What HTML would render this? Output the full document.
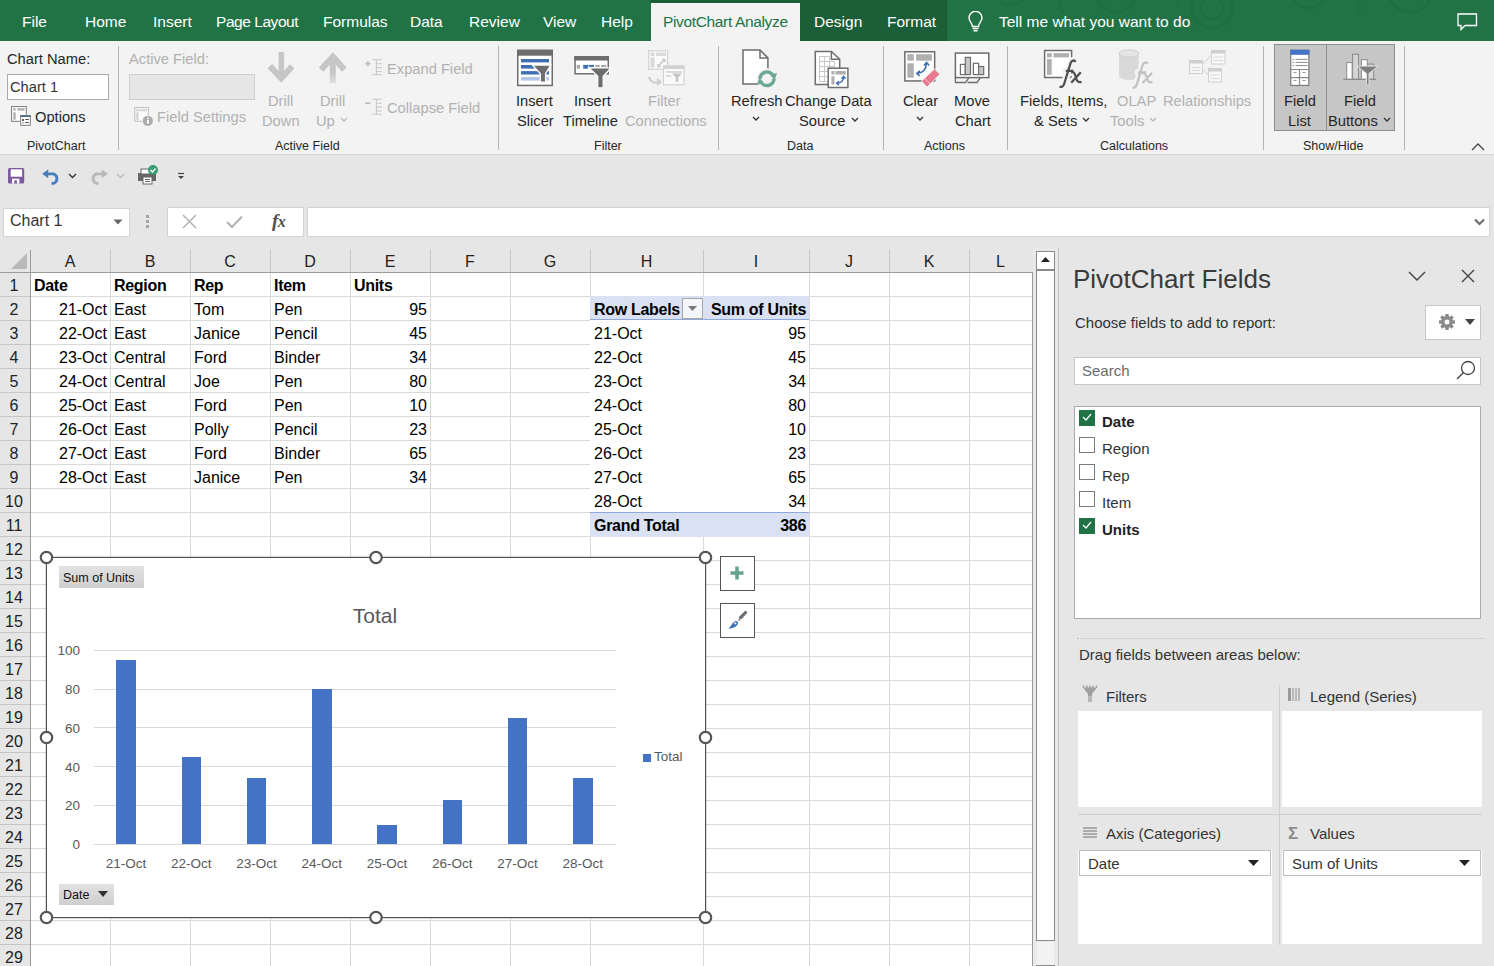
<!DOCTYPE html>
<html><head><meta charset="utf-8">
<style>
*{box-sizing:border-box;margin:0;padding:0}
html,body{width:1494px;height:966px;overflow:hidden;background:#e6e6e6;font-family:"Liberation Sans",sans-serif;position:relative}
.a{position:absolute}
.t{position:absolute;white-space:nowrap}
#title{left:0;top:0;width:1494px;height:41px;background:#217346}
.tab{position:absolute;top:13px;color:#fff;font-size:15.5px}
#ribbon{left:0;top:41px;width:1494px;height:114px;background:#f3f3f3;border-bottom:1px solid #d6d6d6}
.rl{color:#262626;font-size:14.7px}
.dis{color:#b1b1b1}
.grp{color:#262626;font-size:12.5px}
.hd{font-size:16px;color:#222;text-align:center}
.c{font-size:16px;color:#000}
.ax{font-size:13.5px;color:#595959}
.pn{font-size:15px;color:#333}
.sep{position:absolute;top:46px;width:1px;height:104px;background:#b4b4b4}
</style></head><body>
<div id="title" class="a">
  <div class="a" style="left:650px;top:0;width:297px;height:3px;background:#1b5e38"></div>
  <div class="a" style="left:800px;top:0;width:147px;height:41px;background:#1b5e38"></div>
  <div class="a" style="left:651px;top:3px;width:149px;height:38px;background:#f3f3f3"></div>
  <div class="tab" style="left:22px">File</div>
  <div class="tab" style="left:85px">Home</div>
  <div class="tab" style="left:153px">Insert</div>
  <div class="tab" style="left:216px;letter-spacing:-0.45px">Page Layout</div>
  <div class="tab" style="left:323px">Formulas</div>
  <div class="tab" style="left:410px">Data</div>
  <div class="tab" style="left:469px">Review</div>
  <div class="tab" style="left:543px">View</div>
  <div class="tab" style="left:601px">Help</div>
  <div class="tab" style="left:663px;color:#217346;letter-spacing:-0.35px">PivotChart Analyze</div>
  <div class="tab" style="left:814px">Design</div>
  <div class="tab" style="left:887px">Format</div>
  
  <svg class="a" style="left:1000px;top:0" width="450" height="41" viewBox="0 0 450 41"><g fill="none" stroke="rgba(0,0,0,0.04)" stroke-width="3"><circle cx="10" cy="-12" r="17"/><circle cx="116" cy="-8" r="20"/><circle cx="212" cy="8" r="20"/><circle cx="212" cy="8" r="11"/><circle cx="309" cy="-10" r="18"/><circle cx="410" cy="-10" r="22"/><path d="M61 0 C58 8 60 12 64 12"/><path d="M360 0 C356 8 358 14 362 14"/><path d="M178 0 V6"/></g></svg>
  <svg class="a" style="left:967px;top:11px" width="17" height="22" viewBox="0 0 17 22"><path d="M5.5 15.5 C5.5 12 2 10.5 2 6.8 A6.5 6.5 0 0 1 15 6.8 C15 10.5 11.5 12 11.5 15.5 Z" fill="none" stroke="#fff" stroke-width="1.4"/><path d="M5.5 17.5 H11.5 M6.5 19.8 H10.5" stroke="#fff" stroke-width="1.4"/></svg>
  <svg class="a" style="left:1457px;top:13px" width="21" height="18" viewBox="0 0 21 18"><path d="M1 1 H19.5 V12.5 H8 L4 16.5 V12.5 H1 Z" fill="none" stroke="#fff" stroke-width="1.3"/></svg>
<div class="tab" style="left:999px">Tell me what you want to do</div>
</div>

<div id="ribbon" class="a"></div>
<div class="sep" style="left:118px"></div>
<div class="sep" style="left:498px"></div>
<div class="sep" style="left:718px"></div>
<div class="sep" style="left:883px"></div>
<div class="sep" style="left:1007px"></div>
<div class="sep" style="left:1263px"></div>
<div class="sep" style="left:1404px"></div>
<!-- PivotChart group -->
<div class="t rl" style="left:7px;top:51px">Chart Name:</div>
<div class="a" style="left:7px;top:74px;width:102px;height:26px;background:#fff;border:1px solid #ababab"></div>
<div class="t rl" style="left:10px;top:79px;color:#333">Chart 1</div>
<svg class="a" style="left:8px;top:103px" width="26" height="26" viewBox="8 103 26 26"><rect x="11.6" y="106.6" width="14.7" height="14.7" fill="#fff" stroke="#6d6d6d" stroke-width="0.9"/><rect x="13.3" y="108.2" width="2.4" height="2.4" fill="#b0b0b0"/><rect x="17.3" y="108.2" width="7.4" height="2.4" fill="#b0b0b0"/><rect x="13.3" y="112.2" width="2.4" height="7.5" fill="#b0b0b0"/><rect x="19.8" y="114.8" width="11.4" height="11.4" fill="#fff"/><rect x="20.7" y="115.7" width="9.6" height="9.6" fill="#fff" stroke="#6d6d6d" stroke-width="0.9"/><rect x="20.3" y="115.3" width="10.4" height="1.6" fill="#44648a"/><rect x="22.1" y="119.1" width="1.8" height="1.8" fill="#444"/><rect x="25.1" y="119.1" width="3.8" height="0.9" fill="#444"/><rect x="22.1" y="122.1" width="1.8" height="1.8" fill="#bbb"/><rect x="25.1" y="122.1" width="3.8" height="0.9" fill="#444"/></svg>
<div class="t rl" style="left:35px;top:109px">Options</div>
<div class="t grp" style="left:27px;top:139px">PivotChart</div>
<!-- Active Field group -->
<div class="t rl dis" style="left:129px;top:51px">Active Field:</div>
<div class="a" style="left:129px;top:74px;width:126px;height:26px;background:#e6e6e6;border:1px solid #cfcfcf"></div>
<svg class="a" style="left:130px;top:104px" width="26" height="26" viewBox="130 104 26 26"><rect x="134.8" y="107.6" width="13.5" height="13.6" fill="#fafafa" stroke="#b8b8b8" stroke-width="0.9"/><rect x="136.3" y="109.1" width="2.2" height="2.2" fill="#d0d0d0"/><rect x="139.3" y="109.1" width="7.7" height="2.2" fill="#d6d6d6"/><rect x="136.3" y="112.3" width="2.2" height="7.5" fill="#d0d0d0"/><circle cx="147.8" cy="120.9" r="6" fill="#f3f3f3"/><circle cx="147.8" cy="120.9" r="5" fill="#ababab"/><rect x="147" y="119.8" width="1.8" height="3.9" fill="#fff"/><rect x="147" y="117.6" width="1.8" height="1.3" fill="#fff"/></svg>
<div class="t rl dis" style="left:157px;top:109px">Field Settings</div>
<svg class="a" style="left:260px;top:48px" width="44" height="40" viewBox="260 48 44 40"><rect x="278.6" y="51.9" width="5.5" height="24" fill="#c6c6c6"/><path d="M269.8 66.2 L281.3 78.3 L292.2 66.2" stroke="#c6c6c6" stroke-width="6.2" fill="none" stroke-linejoin="miter"/></svg>
<div class="t rl dis" style="left:268px;top:93px">Drill</div>
<div class="t rl dis" style="left:262px;top:113px">Down</div>
<svg class="a" style="left:312px;top:46px" width="44" height="42" viewBox="312 46 44 42"><defs><linearGradient id="gu" x1="0" y1="0" x2="0" y2="1"><stop offset="0.55" stop-color="#c6c6c6"/><stop offset="1" stop-color="#dedede"/></linearGradient></defs><rect x="329.8" y="57" width="6" height="26.3" fill="url(#gu)"/><path d="M321 69.6 L332.9 56.8 L344.3 69.6" stroke="#c6c6c6" stroke-width="6.2" fill="none" stroke-linejoin="miter"/></svg>
<div class="t rl dis" style="left:320px;top:93px">Drill</div>
<div class="t rl dis" style="left:316px;top:113px">Up <svg width="8" height="5" viewBox="0 0 8 5" style="vertical-align:4px;margin-left:1px"><path d="M1 1 L4 4 L7 1" stroke="#b8b8b8" stroke-width="1.3" fill="none"/></svg></div>
<svg class="a" style="left:362px;top:56px" width="24" height="22" viewBox="362 56 24 22"><path d="M365.1 63.6 H370.6 M367.85 61 V66.2" stroke="#bdbdbd" stroke-width="1.6"/><path d="M372.2 59.7 H381.8 M376.4 59.7 V74.7 M376.4 63.7 H381.8 M376.4 67.6 H381.8 M376.4 71.5 H381.8 M372.2 74.7 H381.8" stroke="#c8c8c8" stroke-width="1.1"/></svg>
<div class="t rl dis" style="left:387px;top:61px">Expand Field</div>
<svg class="a" style="left:362px;top:96px" width="24" height="22" viewBox="362 96 24 22"><path d="M365.1 103.2 H370.6" stroke="#bdbdbd" stroke-width="1.6"/><path d="M372.2 99.2 H381.8 M376.4 99.2 V114.2 M376.4 103.2 H381.8 M376.4 107.1 H381.8 M376.4 111 H381.8 M372.2 114.2 H381.8" stroke="#c8c8c8" stroke-width="1.1"/></svg>
<div class="t rl dis" style="left:387px;top:100px">Collapse Field</div>
<div class="t grp" style="left:275px;top:139px">Active Field</div>
<!-- Filter group -->
<svg class="a" style="left:517px;top:49px" width="37" height="38" viewBox="0 0 37 38"><rect x="0.75" y="1.45" width="34.5" height="35" fill="#fff" stroke="#6d6d6d" stroke-width="1.5"/><rect x="0" y="0.7" width="36" height="6" fill="#6d6d6d"/><rect x="4" y="10" width="28" height="3.4" fill="#3f6fb1"/><rect x="4" y="16" width="28" height="3.6" fill="#3f6fb1"/><rect x="4" y="22.1" width="28" height="3.4" fill="#3f6fb1"/><rect x="4" y="28" width="28" height="3.6" fill="#b4c6e7"/><path d="M15.3 16 H33.7 L28.6 24.7 V33.1 H23.4 V24.7 Z" fill="#6d6d6d" stroke="#fff" stroke-width="1.3"/></svg>
<div class="t rl" style="left:516px;top:93px">Insert</div>
<div class="t rl" style="left:517px;top:113px">Slicer</div>
<svg class="a" style="left:573px;top:55px" width="40" height="34" viewBox="0 0 40 34"><rect x="2.05" y="1.75" width="33.2" height="17" fill="#fff" stroke="#6d6d6d" stroke-width="1.5"/><rect x="1.3" y="1" width="34.7" height="4.5" fill="#6d6d6d"/><rect x="3.8" y="9.9" width="3.1" height="3.8" fill="#a6a6a6"/><rect x="10.2" y="9.9" width="5.1" height="3.8" fill="#3f6fb1"/><rect x="15.9" y="9.9" width="5.1" height="2" fill="#3f6fb1"/><rect x="22.3" y="9.9" width="4.4" height="2" fill="#a6a6a6"/><rect x="28" y="9.9" width="5.1" height="2" fill="#a6a6a6"/><path d="M15.9 12.8 H38.2 L30.2 21.3 V32.8 H24.7 V21.3 Z" fill="#6d6d6d" stroke="#fff" stroke-width="1.3"/></svg>
<div class="t rl" style="left:574px;top:93px">Insert</div>
<div class="t rl" style="left:563px;top:113px">Timeline</div>
<svg class="a" style="left:646px;top:49px" width="40" height="38" viewBox="0 0 40 38"><rect x="2.75" y="1.75" width="18.8" height="18.5" fill="#fafafa" stroke="#d2d2d2" stroke-width="1.2"/><rect x="4.5" y="3.5" width="4" height="3.5" fill="#dadada"/><rect x="10" y="3.5" width="10" height="3.5" fill="#dadada"/><rect x="4.5" y="8.5" width="4" height="10" fill="#dadada"/><path d="M12 17.5 L18.5 10.5 M16 10.3 H18.7 V13 M12 15 V17.7 H14.7" stroke="#c4c4c4" stroke-width="1.3" fill="none"/><rect x="17.5" y="17" width="20.5" height="18.8" fill="#fafafa" stroke="#d2d2d2" stroke-width="1.2"/><rect x="17" y="16.5" width="21.5" height="3.5" fill="#d2d2d2"/><path d="M20 23 H36 M20 27 H25" stroke="#cfcfcf" stroke-width="1.5"/><path d="M26 24.5 H36 L32.2 28.5 V33 H29.8 V28.5 Z" fill="#c4c4c4"/><path d="M3 28 C4 33 9 34.5 13 33" stroke="#cfcfcf" stroke-width="2.2" fill="none"/><path d="M11 30 L14.5 33 L11 36" stroke="#cfcfcf" stroke-width="2" fill="none"/></svg>
<div class="t rl dis" style="left:648px;top:93px">Filter</div>
<div class="t rl dis" style="left:625px;top:113px">Connections</div>
<div class="t grp" style="left:594px;top:139px">Filter</div>
<!-- Data group -->
<svg class="a" style="left:740px;top:48px" width="40" height="42" viewBox="0 0 40 42"><path d="M3 2.1 H20 L27.9 9.9 V36 H3 Z" fill="#fff" stroke="#6d6d6d" stroke-width="1.5"/><path d="M20 2.1 V9.9 H27.9" fill="none" stroke="#6d6d6d" stroke-width="1.5"/><circle cx="27" cy="30.8" r="10.5" fill="#f3f3f3"/><path d="M20 30.8 A7 7 0 0 1 33.4 28.2" stroke="#6aa895" stroke-width="3.5" fill="none"/><path d="M29.8 26.2 L37 25.2 L34.6 32.2 Z" fill="#6aa895"/><path d="M34 30.8 A7 7 0 0 1 20.6 33.4" stroke="#6aa895" stroke-width="3.5" fill="none"/><path d="M24.2 35.4 L17 36.4 L19.4 29.4 Z" fill="#6aa895"/></svg>
<div class="t rl" style="left:731px;top:93px">Refresh</div>
<div class="t" style="left:751px;top:111px"><svg width="8" height="5" viewBox="0 0 8 5" style="vertical-align:4px;margin-left:1px"><path d="M1 1 L4 4 L7 1" stroke="#333" stroke-width="1.3" fill="none"/></svg></div>
<svg class="a" style="left:812px;top:48px" width="40" height="42" viewBox="0 0 40 42"><path d="M3.3 3.4 H19.4 L27.7 11.2 V36.5 H3.3 Z" fill="#fff" stroke="#6d6d6d" stroke-width="1.5"/><path d="M19.4 3.4 V11.2 H27.7" fill="none" stroke="#6d6d6d" stroke-width="1.5"/><path d="M7.5 8.5 V33.5 M12.5 8.5 V33.5 M17.5 8.5 V33.5 M22.5 14 V33.5 M7.5 8.5 H17.5 M7.5 13.5 H22.5 M7.5 18.5 H22.5 M7.5 23.5 H22.5 M7.5 28.5 H22.5 M7.5 33.5 H22.5" stroke="#c8c8c8" stroke-width="1"/><rect x="16.2" y="20.2" width="19.7" height="19.3" fill="#fff" stroke="#6d6d6d" stroke-width="1.5"/><rect x="19.4" y="23" width="3.1" height="3.5" fill="#b0b0b0"/><rect x="23.5" y="23" width="10.3" height="3.5" fill="#b0b0b0"/><rect x="19.4" y="28.2" width="3.1" height="8.3" fill="#b0b0b0"/><path d="M25 35.2 C29 35 31.5 32.5 31.6 28.8" stroke="#3f6fb1" stroke-width="1.4" fill="none"/><path d="M27 33.2 L24.6 35.3 L27 37.2 M29.6 30.8 L31.6 28.4 L33.6 30.8" stroke="#3f6fb1" stroke-width="1.4" fill="none"/></svg>
<div class="t rl" style="left:785px;top:93px">Change Data</div>
<div class="t rl" style="left:799px;top:113px">Source <svg width="8" height="5" viewBox="0 0 8 5" style="vertical-align:4px;margin-left:1px"><path d="M1 1 L4 4 L7 1" stroke="#333" stroke-width="1.3" fill="none"/></svg></div>
<div class="t grp" style="left:787px;top:139px">Data</div>
<!-- Actions group -->
<svg class="a" style="left:902px;top:49px" width="42" height="42" viewBox="0 0 42 42"><rect x="2.85" y="2.75" width="29.8" height="29.2" fill="#fff" stroke="#6d6d6d" stroke-width="1.5"/><rect x="5.3" y="5.2" width="6.5" height="6.5" fill="#b0b0b0"/><rect x="14.1" y="5.2" width="15.8" height="6.5" fill="#b0b0b0"/><rect x="5.3" y="14.3" width="6.5" height="14.4" fill="#b0b0b0"/><path d="M15.5 24.3 C20 24 24 21 24.6 14" stroke="#3f6fb1" stroke-width="1.6" fill="none"/><path d="M17.8 21.8 L14.8 24.4 L17.8 27 M22 16.5 L24.6 13.4 L27.2 16.5" stroke="#3f6fb1" stroke-width="1.6" fill="none"/><path d="M19.4 32.2 L32.4 19.9 L38 25.2 L25 38.2 Z" fill="#e8798f" stroke="#f3f3f3" stroke-width="1"/><path d="M22.5 29.3 L28.2 34.8" stroke="#f6c3cd" stroke-width="1"/></svg>
<div class="t rl" style="left:903px;top:93px">Clear</div>
<div class="t" style="left:915px;top:111px"><svg width="8" height="5" viewBox="0 0 8 5" style="vertical-align:4px;margin-left:1px"><path d="M1 1 L4 4 L7 1" stroke="#333" stroke-width="1.3" fill="none"/></svg></div>
<svg class="a" style="left:953px;top:51px" width="38" height="34" viewBox="0 0 38 34"><rect x="2.4" y="2.1" width="33.4" height="24.5" fill="#fff" stroke="#6d6d6d" stroke-width="1.5"/><rect x="7.4" y="13.4" width="4.9" height="10.2" fill="#fff" stroke="#6d6d6d" stroke-width="1.2"/><rect x="12.3" y="6.4" width="5.2" height="17.2" fill="#c8c8c8" stroke="#6d6d6d" stroke-width="1.2"/><rect x="20.4" y="12.3" width="5.2" height="11.3" fill="#fff" stroke="#6d6d6d" stroke-width="1.2"/><rect x="25.6" y="15.5" width="5.1" height="8.1" fill="#c8c8c8" stroke="#6d6d6d" stroke-width="1.2"/><path d="M2.4 26.6 V31.5 H12.5 L16 26.6 M14.5 31.5 H24 L27.5 26.6" fill="none" stroke="#6d6d6d" stroke-width="1.3"/></svg>
<div class="t rl" style="left:954px;top:93px">Move</div>
<div class="t rl" style="left:955px;top:113px">Chart</div>
<div class="t grp" style="left:924px;top:139px">Actions</div>
<!-- Calculations group -->
<svg class="a" style="left:1042px;top:48px" width="44" height="42" viewBox="0 0 44 42"><rect x="2.6" y="2.5" width="27" height="27" fill="#fff" stroke="#6d6d6d" stroke-width="1.5"/><rect x="5" y="5.1" width="4.7" height="4.3" fill="#b0b0b0"/><rect x="11.5" y="5.1" width="15.6" height="4.3" fill="#b0b0b0"/><rect x="5" y="11" width="4.7" height="15.8" fill="#b0b0b0"/><g stroke="#f3f3f3" stroke-width="7" fill="none" stroke-linecap="round"><path d="M33.5 14 C32.5 11.8 29.5 12 28.6 15 L22.3 35.5 C21.5 38.3 19.5 39.5 17.5 38.5 M23.8 22.8 H31.5"/><path d="M29 24.5 C31.5 23.5 32.5 24.5 33.5 28 C34.5 32.5 35.5 35 39.5 33.8 M38.8 24.2 L29.2 34.8"/></g><g stroke="#505050" stroke-width="2.3" fill="none"><path d="M33.5 14 C32.5 11.8 29.5 12 28.6 15 L22.3 35.5 C21.5 38.3 19.5 39.5 17.5 38.5 M23.8 22.8 H31.5"/><path d="M29 24.5 C31.5 23.5 32.5 24.5 33.5 28 C34.5 32.5 35.5 35 39.5 33.8 M38.8 24.2 L29.2 34.8"/></g></svg>
<div class="t rl" style="left:1020px;top:93px">Fields, Items,</div>
<div class="t rl" style="left:1034px;top:113px">&amp; Sets <svg width="8" height="5" viewBox="0 0 8 5" style="vertical-align:4px;margin-left:1px"><path d="M1 1 L4 4 L7 1" stroke="#333" stroke-width="1.3" fill="none"/></svg></div>
<svg class="a" style="left:1117px;top:48px" width="40" height="42" viewBox="0 0 40 42"><path d="M2 5.5 V28 A9.85 4 0 0 0 21.7 28 V5.5 Z" fill="#d9d9d9"/><ellipse cx="11.85" cy="5.5" rx="9.85" ry="3.7" fill="#e4e4e4" stroke="#d0d0d0" stroke-width="1"/><g stroke="#f3f3f3" stroke-width="7" fill="none" stroke-linecap="round"><path d="M30.5 16 C29.5 13.8 26.5 14 25.6 17 L19.8 36.5 C19 39.3 17.5 40 15.5 39.5 M21 24.5 H29"/><path d="M25 25.5 C27.5 24.5 28.5 25.5 29.5 29 C30.5 33 31.5 35 35.5 34 M35 25 L25.5 35"/></g><g stroke="#c2c2c2" stroke-width="2.3" fill="none"><path d="M30.5 16 C29.5 13.8 26.5 14 25.6 17 L19.8 36.5 C19 39.3 17.5 40 15.5 39.5 M21 24.5 H29"/><path d="M25 25.5 C27.5 24.5 28.5 25.5 29.5 29 C30.5 33 31.5 35 35.5 34 M35 25 L25.5 35"/></g></svg>
<div class="t rl dis" style="left:1117px;top:93px">OLAP</div>
<div class="t rl dis" style="left:1110px;top:113px">Tools <svg width="8" height="5" viewBox="0 0 8 5" style="vertical-align:4px;margin-left:1px"><path d="M1 1 L4 4 L7 1" stroke="#b8b8b8" stroke-width="1.3" fill="none"/></svg></div>
<svg class="a" style="left:1187px;top:48px" width="40" height="36" viewBox="0 0 40 36"><g stroke="#d0d0d0" stroke-width="1" fill="#f7f7f7"><rect x="2.5" y="12.5" width="13" height="13"/><rect x="24.5" y="2.5" width="13.5" height="13.5"/><rect x="21.5" y="20.5" width="13" height="13.5"/></g><g fill="#d0d0d0"><rect x="2" y="12" width="14" height="3.5"/><rect x="24" y="2" width="14.5" height="3.5"/><rect x="21" y="20" width="14" height="3.5"/></g><path d="M4.5 19.5 H13.5 M4.5 22.5 H13.5 M26.5 9 H36 M26.5 12.5 H36 M23.5 27 H32.5 M23.5 30.5 H32.5" stroke="#d8d8d8" stroke-width="1"/><path d="M15.5 16.5 L24.5 7 M15.5 21 L21.5 27" stroke="#d0d0d0" stroke-width="1"/></svg>
<div class="t rl dis" style="left:1163px;top:93px">Relationships</div>
<div class="t grp" style="left:1100px;top:139px">Calculations</div>
<!-- Show/Hide group -->
<div class="a" style="left:1274px;top:44px;width:53px;height:87px;background:#c6c6c6;border:1px solid #8f8f8f"></div>
<div class="a" style="left:1326px;top:44px;width:69px;height:87px;background:#c6c6c6;border:1px solid #8f8f8f"></div>
<svg class="a" style="left:1289px;top:49px" width="22" height="38" viewBox="0 0 22 38"><rect x="1.75" y="1.25" width="18.1" height="35.2" fill="#fff" stroke="#7a7a7a" stroke-width="1.2"/><rect x="1.2" y="0.8" width="19.2" height="5" fill="#4472c4"/><path d="M3.5 10.4 H5 M6.5 10.4 H18.5 M3.5 13.4 H5 M6.5 13.4 H18.5 M3.5 16.6 H5 M6.5 16.6 H18.5" stroke="#8a8a8a" stroke-width="1"/><path d="M1.5 20.5 H20 M1.5 28.7 H20 M10.5 20.5 V36.5" stroke="#8a8a8a" stroke-width="1.2"/><path d="M4.5 23.5 H7.5 M13.5 23.5 H16.5 M4.5 31.5 H7.5 M13.5 31.5 H16.5" stroke="#9a9a9a" stroke-width="1"/></svg>
<div class="t rl" style="left:1284px;top:93px">Field</div>
<div class="t rl" style="left:1288px;top:113px">List</div>
<svg class="a" style="left:1342px;top:52px" width="38" height="36" viewBox="0 0 38 36"><g stroke="#8a8a8a" stroke-width="1"><rect x="4.7" y="10.6" width="5.4" height="16.7" fill="#fff"/><rect x="10.6" y="2.3" width="5.9" height="25" fill="#d4d4d4"/><rect x="19.4" y="7.7" width="5.9" height="19.6" fill="#fff"/><rect x="25.8" y="12.1" width="5.9" height="15.2" fill="#d4d4d4"/></g><path d="M1.3 27.3 H34.2" stroke="#8a8a8a" stroke-width="1.2"/><path d="M15 14.1 H36.2 L27 21.4 V33.2 H24.4 V21.4 Z" fill="#7f7f7f" stroke="#e8e8e8" stroke-width="0.9"/></svg>
<div class="t rl" style="left:1344px;top:93px">Field</div>
<div class="t rl" style="left:1328px;top:113px">Buttons <svg width="8" height="5" viewBox="0 0 8 5" style="vertical-align:4px;margin-left:1px"><path d="M1 1 L4 4 L7 1" stroke="#333" stroke-width="1.3" fill="none"/></svg></div>
<div class="t grp" style="left:1303px;top:139px">Show/Hide</div>
<svg class="a" style="left:1471px;top:142px" width="14" height="9" viewBox="0 0 14 9"><path d="M1 8 L7 2 L13 8" stroke="#444" stroke-width="1.3" fill="none"/></svg>

<!--GRID-->

<!-- QAT -->
<svg class="a" style="left:8px;top:168px" width="17" height="16" viewBox="0 0 17 16"><rect x="0" y="0" width="16.2" height="15.5" rx="1.5" fill="#80589f"/><rect x="2.7" y="1.3" width="11.4" height="7.4" fill="#fff"/><rect x="4" y="10.7" width="7.4" height="4.8" fill="#fff"/><rect x="6.3" y="12.4" width="2.6" height="3.1" fill="#80589f"/></svg>
<svg class="a" style="left:41px;top:168px" width="20" height="17" viewBox="0 0 20 17"><path d="M6 5.8 H12.5 A5 5 0 0 1 12.5 15.3 H10.5" stroke="#4a7ebb" stroke-width="2.8" fill="none"/><path d="M1.2 5.8 L7.2 1.4 V10.2 Z" fill="#4a7ebb"/></svg>
<svg class="a" style="left:68px;top:173px" width="9" height="6" viewBox="0 0 9 6"><path d="M1 1 L4.5 4.5 L8 1" stroke="#333" stroke-width="1.3" fill="none"/></svg>
<svg class="a" style="left:89px;top:168px" width="20" height="17" viewBox="0 0 20 17"><path d="M14 5.8 H7.5 A5 5 0 0 0 7.5 15.3 H9.5" stroke="#b8b8b8" stroke-width="2.8" fill="none"/><path d="M18.8 5.8 L12.8 1.4 V10.2 Z" fill="#b8b8b8"/></svg>
<svg class="a" style="left:116px;top:173px" width="9" height="6" viewBox="0 0 9 6"><path d="M1 1 L4.5 4.5 L8 1" stroke="#bbb" stroke-width="1.3" fill="none"/></svg>
<svg class="a" style="left:137px;top:165px" width="22" height="20" viewBox="0 0 22 20"><rect x="1" y="8" width="18" height="8" fill="#666"/><rect x="4" y="4" width="9" height="5" fill="#fff" stroke="#666"/><rect x="6" y="12" width="9" height="7" fill="#fff" stroke="#666"/><path d="M8 14.5h5M8 16.5h5" stroke="#666"/><circle cx="16" cy="5" r="5" fill="#3b9b72"/><path d="M13.5 5 L15.5 7 L18.5 3.5" stroke="#fff" stroke-width="1.3" fill="none"/></svg>
<svg class="a" style="left:177px;top:172px" width="8" height="8" viewBox="0 0 8 8"><path d="M1 1.5h6" stroke="#444" stroke-width="1.2"/><path d="M1 4 H7 L4 7 Z" fill="#444"/></svg>
<!-- Formula bar -->
<div class="a" style="left:3px;top:208px;width:127px;height:29px;background:#fff;border:1px solid #d4d4d4"></div>
<div class="t" style="left:10px;top:212px;font-size:16px;color:#333">Chart 1</div>
<svg class="a" style="left:113px;top:219px" width="10" height="6" viewBox="0 0 10 6"><path d="M0.5 0.5 H9.5 L5 5.5 Z" fill="#666"/></svg>
<div class="a" style="left:146px;top:215px;width:3px;height:3px;background:#a6a6a6"></div>
<div class="a" style="left:146px;top:220px;width:3px;height:3px;background:#a6a6a6"></div>
<div class="a" style="left:146px;top:225px;width:3px;height:3px;background:#a6a6a6"></div>
<div class="a" style="left:167px;top:207px;width:137px;height:30px;background:#fff;border:1px solid #d4d4d4"></div>
<svg class="a" style="left:182px;top:214px" width="15" height="15" viewBox="0 0 15 15"><path d="M1 1 L14 14 M14 1 L1 14" stroke="#b3b3b3" stroke-width="1.5"/></svg>
<svg class="a" style="left:226px;top:215px" width="17" height="14" viewBox="0 0 17 14"><path d="M1 7 L6 12 L16 1.5" stroke="#b3b3b3" stroke-width="2" fill="none"/></svg>
<div class="t" style="left:272px;top:210px;font-family:'Liberation Serif',serif;font-style:italic;font-weight:bold;font-size:19px;color:#505050;letter-spacing:-0.5px">f<span style="font-size:16px">x</span></div>
<div class="a" style="left:307px;top:207px;width:1183px;height:30px;background:#fff;border:1px solid #d4d4d4"></div>
<svg class="a" style="left:1474px;top:218px" width="11" height="8" viewBox="0 0 11 8"><path d="M1 1.5 L5.5 6 L10 1.5" stroke="#6d6d6d" stroke-width="2.2" fill="none"/></svg>

<div class="a" style="left:30px;top:272px;width:1002px;height:694px;background:#fff"></div>
<div class="a" style="left:0;top:248px;width:1032px;height:24px;background:#e6e6e6"></div>
<div class="a" style="left:0;top:272px;width:30px;height:694px;background:#e6e6e6"></div>
<svg class="a" style="left:11px;top:253px" width="17" height="16" viewBox="0 0 17 16"><path d="M16 0 V16 H0 Z" fill="#b9b9b9"/></svg>
<div class="a" style="left:110px;top:272px;width:1px;height:694px;background:#dadada"></div>
<div class="a" style="left:190px;top:272px;width:1px;height:694px;background:#dadada"></div>
<div class="a" style="left:270px;top:272px;width:1px;height:694px;background:#dadada"></div>
<div class="a" style="left:350px;top:272px;width:1px;height:694px;background:#dadada"></div>
<div class="a" style="left:430px;top:272px;width:1px;height:694px;background:#dadada"></div>
<div class="a" style="left:510px;top:272px;width:1px;height:694px;background:#dadada"></div>
<div class="a" style="left:590px;top:272px;width:1px;height:694px;background:#dadada"></div>
<div class="a" style="left:703px;top:272px;width:1px;height:694px;background:#dadada"></div>
<div class="a" style="left:809px;top:272px;width:1px;height:694px;background:#dadada"></div>
<div class="a" style="left:889px;top:272px;width:1px;height:694px;background:#dadada"></div>
<div class="a" style="left:969px;top:272px;width:1px;height:694px;background:#dadada"></div>
<div class="a" style="left:30px;top:296px;width:1002px;height:1px;background:#dadada"></div>
<div class="a" style="left:30px;top:320px;width:1002px;height:1px;background:#dadada"></div>
<div class="a" style="left:30px;top:344px;width:1002px;height:1px;background:#dadada"></div>
<div class="a" style="left:30px;top:368px;width:1002px;height:1px;background:#dadada"></div>
<div class="a" style="left:30px;top:392px;width:1002px;height:1px;background:#dadada"></div>
<div class="a" style="left:30px;top:416px;width:1002px;height:1px;background:#dadada"></div>
<div class="a" style="left:30px;top:440px;width:1002px;height:1px;background:#dadada"></div>
<div class="a" style="left:30px;top:464px;width:1002px;height:1px;background:#dadada"></div>
<div class="a" style="left:30px;top:488px;width:1002px;height:1px;background:#dadada"></div>
<div class="a" style="left:30px;top:512px;width:1002px;height:1px;background:#dadada"></div>
<div class="a" style="left:30px;top:536px;width:1002px;height:1px;background:#dadada"></div>
<div class="a" style="left:30px;top:560px;width:1002px;height:1px;background:#dadada"></div>
<div class="a" style="left:30px;top:584px;width:1002px;height:1px;background:#dadada"></div>
<div class="a" style="left:30px;top:608px;width:1002px;height:1px;background:#dadada"></div>
<div class="a" style="left:30px;top:632px;width:1002px;height:1px;background:#dadada"></div>
<div class="a" style="left:30px;top:656px;width:1002px;height:1px;background:#dadada"></div>
<div class="a" style="left:30px;top:680px;width:1002px;height:1px;background:#dadada"></div>
<div class="a" style="left:30px;top:704px;width:1002px;height:1px;background:#dadada"></div>
<div class="a" style="left:30px;top:728px;width:1002px;height:1px;background:#dadada"></div>
<div class="a" style="left:30px;top:752px;width:1002px;height:1px;background:#dadada"></div>
<div class="a" style="left:30px;top:776px;width:1002px;height:1px;background:#dadada"></div>
<div class="a" style="left:30px;top:800px;width:1002px;height:1px;background:#dadada"></div>
<div class="a" style="left:30px;top:824px;width:1002px;height:1px;background:#dadada"></div>
<div class="a" style="left:30px;top:848px;width:1002px;height:1px;background:#dadada"></div>
<div class="a" style="left:30px;top:872px;width:1002px;height:1px;background:#dadada"></div>
<div class="a" style="left:30px;top:896px;width:1002px;height:1px;background:#dadada"></div>
<div class="a" style="left:30px;top:920px;width:1002px;height:1px;background:#dadada"></div>
<div class="a" style="left:30px;top:944px;width:1002px;height:1px;background:#dadada"></div>
<div class="a" style="left:30px;top:968px;width:1002px;height:1px;background:#dadada"></div>
<div class="a" style="left:110px;top:250px;width:1px;height:22px;background:#c6c6c6"></div>
<div class="a" style="left:190px;top:250px;width:1px;height:22px;background:#c6c6c6"></div>
<div class="a" style="left:270px;top:250px;width:1px;height:22px;background:#c6c6c6"></div>
<div class="a" style="left:350px;top:250px;width:1px;height:22px;background:#c6c6c6"></div>
<div class="a" style="left:430px;top:250px;width:1px;height:22px;background:#c6c6c6"></div>
<div class="a" style="left:510px;top:250px;width:1px;height:22px;background:#c6c6c6"></div>
<div class="a" style="left:590px;top:250px;width:1px;height:22px;background:#c6c6c6"></div>
<div class="a" style="left:703px;top:250px;width:1px;height:22px;background:#c6c6c6"></div>
<div class="a" style="left:809px;top:250px;width:1px;height:22px;background:#c6c6c6"></div>
<div class="a" style="left:889px;top:250px;width:1px;height:22px;background:#c6c6c6"></div>
<div class="a" style="left:969px;top:250px;width:1px;height:22px;background:#c6c6c6"></div>
<div class="a" style="left:30px;top:250px;width:1px;height:716px;background:#9b9b9b"></div>
<div class="a" style="left:0;top:272px;width:1032px;height:1px;background:#9b9b9b"></div>
<div class="a" style="left:0;top:296px;width:30px;height:1px;background:#c6c6c6"></div>
<div class="a" style="left:0;top:320px;width:30px;height:1px;background:#c6c6c6"></div>
<div class="a" style="left:0;top:344px;width:30px;height:1px;background:#c6c6c6"></div>
<div class="a" style="left:0;top:368px;width:30px;height:1px;background:#c6c6c6"></div>
<div class="a" style="left:0;top:392px;width:30px;height:1px;background:#c6c6c6"></div>
<div class="a" style="left:0;top:416px;width:30px;height:1px;background:#c6c6c6"></div>
<div class="a" style="left:0;top:440px;width:30px;height:1px;background:#c6c6c6"></div>
<div class="a" style="left:0;top:464px;width:30px;height:1px;background:#c6c6c6"></div>
<div class="a" style="left:0;top:488px;width:30px;height:1px;background:#c6c6c6"></div>
<div class="a" style="left:0;top:512px;width:30px;height:1px;background:#c6c6c6"></div>
<div class="a" style="left:0;top:536px;width:30px;height:1px;background:#c6c6c6"></div>
<div class="a" style="left:0;top:560px;width:30px;height:1px;background:#c6c6c6"></div>
<div class="a" style="left:0;top:584px;width:30px;height:1px;background:#c6c6c6"></div>
<div class="a" style="left:0;top:608px;width:30px;height:1px;background:#c6c6c6"></div>
<div class="a" style="left:0;top:632px;width:30px;height:1px;background:#c6c6c6"></div>
<div class="a" style="left:0;top:656px;width:30px;height:1px;background:#c6c6c6"></div>
<div class="a" style="left:0;top:680px;width:30px;height:1px;background:#c6c6c6"></div>
<div class="a" style="left:0;top:704px;width:30px;height:1px;background:#c6c6c6"></div>
<div class="a" style="left:0;top:728px;width:30px;height:1px;background:#c6c6c6"></div>
<div class="a" style="left:0;top:752px;width:30px;height:1px;background:#c6c6c6"></div>
<div class="a" style="left:0;top:776px;width:30px;height:1px;background:#c6c6c6"></div>
<div class="a" style="left:0;top:800px;width:30px;height:1px;background:#c6c6c6"></div>
<div class="a" style="left:0;top:824px;width:30px;height:1px;background:#c6c6c6"></div>
<div class="a" style="left:0;top:848px;width:30px;height:1px;background:#c6c6c6"></div>
<div class="a" style="left:0;top:872px;width:30px;height:1px;background:#c6c6c6"></div>
<div class="a" style="left:0;top:896px;width:30px;height:1px;background:#c6c6c6"></div>
<div class="a" style="left:0;top:920px;width:30px;height:1px;background:#c6c6c6"></div>
<div class="a" style="left:0;top:944px;width:30px;height:1px;background:#c6c6c6"></div>
<div class="a" style="left:0;top:968px;width:30px;height:1px;background:#c6c6c6"></div>
<div class="a" style="left:1032px;top:272px;width:1px;height:694px;background:#9b9b9b"></div>
<div class="t hd" style="left:50.0px;width:40px;top:253px">A</div>
<div class="t hd" style="left:130.0px;width:40px;top:253px">B</div>
<div class="t hd" style="left:210.0px;width:40px;top:253px">C</div>
<div class="t hd" style="left:290.0px;width:40px;top:253px">D</div>
<div class="t hd" style="left:370.0px;width:40px;top:253px">E</div>
<div class="t hd" style="left:450.0px;width:40px;top:253px">F</div>
<div class="t hd" style="left:530.0px;width:40px;top:253px">G</div>
<div class="t hd" style="left:626.5px;width:40px;top:253px">H</div>
<div class="t hd" style="left:736.0px;width:40px;top:253px">I</div>
<div class="t hd" style="left:829.0px;width:40px;top:253px">J</div>
<div class="t hd" style="left:909.0px;width:40px;top:253px">K</div>
<div class="t hd" style="left:980.5px;width:40px;top:253px">L</div>
<div class="t hd rn" style="left:0;width:28px;top:277px">1</div>
<div class="t hd rn" style="left:0;width:28px;top:301px">2</div>
<div class="t hd rn" style="left:0;width:28px;top:325px">3</div>
<div class="t hd rn" style="left:0;width:28px;top:349px">4</div>
<div class="t hd rn" style="left:0;width:28px;top:373px">5</div>
<div class="t hd rn" style="left:0;width:28px;top:397px">6</div>
<div class="t hd rn" style="left:0;width:28px;top:421px">7</div>
<div class="t hd rn" style="left:0;width:28px;top:445px">8</div>
<div class="t hd rn" style="left:0;width:28px;top:469px">9</div>
<div class="t hd rn" style="left:0;width:28px;top:493px">10</div>
<div class="t hd rn" style="left:0;width:28px;top:517px">11</div>
<div class="t hd rn" style="left:0;width:28px;top:541px">12</div>
<div class="t hd rn" style="left:0;width:28px;top:565px">13</div>
<div class="t hd rn" style="left:0;width:28px;top:589px">14</div>
<div class="t hd rn" style="left:0;width:28px;top:613px">15</div>
<div class="t hd rn" style="left:0;width:28px;top:637px">16</div>
<div class="t hd rn" style="left:0;width:28px;top:661px">17</div>
<div class="t hd rn" style="left:0;width:28px;top:685px">18</div>
<div class="t hd rn" style="left:0;width:28px;top:709px">19</div>
<div class="t hd rn" style="left:0;width:28px;top:733px">20</div>
<div class="t hd rn" style="left:0;width:28px;top:757px">21</div>
<div class="t hd rn" style="left:0;width:28px;top:781px">22</div>
<div class="t hd rn" style="left:0;width:28px;top:805px">23</div>
<div class="t hd rn" style="left:0;width:28px;top:829px">24</div>
<div class="t hd rn" style="left:0;width:28px;top:853px">25</div>
<div class="t hd rn" style="left:0;width:28px;top:877px">26</div>
<div class="t hd rn" style="left:0;width:28px;top:901px">27</div>
<div class="t hd rn" style="left:0;width:28px;top:925px">28</div>
<div class="t hd rn" style="left:0;width:28px;top:949px">29</div>
<div class="t c" style="left:34px;top:277px;font-weight:bold;letter-spacing:-0.3px;">Date</div>
<div class="t c" style="left:114px;top:277px;font-weight:bold;letter-spacing:-0.3px;">Region</div>
<div class="t c" style="left:194px;top:277px;font-weight:bold;letter-spacing:-0.3px;">Rep</div>
<div class="t c" style="left:274px;top:277px;font-weight:bold;letter-spacing:-0.3px;">Item</div>
<div class="t c" style="left:354px;top:277px;font-weight:bold;letter-spacing:-0.3px;">Units</div>
<div class="t c" style="left:30px;width:77px;text-align:right;top:301px;">21-Oct</div>
<div class="t c" style="left:114px;top:301px;">East</div>
<div class="t c" style="left:194px;top:301px;">Tom</div>
<div class="t c" style="left:274px;top:301px;">Pen</div>
<div class="t c" style="left:350px;width:77px;text-align:right;top:301px;">95</div>
<div class="t c" style="left:30px;width:77px;text-align:right;top:325px;">22-Oct</div>
<div class="t c" style="left:114px;top:325px;">East</div>
<div class="t c" style="left:194px;top:325px;">Janice</div>
<div class="t c" style="left:274px;top:325px;">Pencil</div>
<div class="t c" style="left:350px;width:77px;text-align:right;top:325px;">45</div>
<div class="t c" style="left:30px;width:77px;text-align:right;top:349px;">23-Oct</div>
<div class="t c" style="left:114px;top:349px;">Central</div>
<div class="t c" style="left:194px;top:349px;">Ford</div>
<div class="t c" style="left:274px;top:349px;">Binder</div>
<div class="t c" style="left:350px;width:77px;text-align:right;top:349px;">34</div>
<div class="t c" style="left:30px;width:77px;text-align:right;top:373px;">24-Oct</div>
<div class="t c" style="left:114px;top:373px;">Central</div>
<div class="t c" style="left:194px;top:373px;">Joe</div>
<div class="t c" style="left:274px;top:373px;">Pen</div>
<div class="t c" style="left:350px;width:77px;text-align:right;top:373px;">80</div>
<div class="t c" style="left:30px;width:77px;text-align:right;top:397px;">25-Oct</div>
<div class="t c" style="left:114px;top:397px;">East</div>
<div class="t c" style="left:194px;top:397px;">Ford</div>
<div class="t c" style="left:274px;top:397px;">Pen</div>
<div class="t c" style="left:350px;width:77px;text-align:right;top:397px;">10</div>
<div class="t c" style="left:30px;width:77px;text-align:right;top:421px;">26-Oct</div>
<div class="t c" style="left:114px;top:421px;">East</div>
<div class="t c" style="left:194px;top:421px;">Polly</div>
<div class="t c" style="left:274px;top:421px;">Pencil</div>
<div class="t c" style="left:350px;width:77px;text-align:right;top:421px;">23</div>
<div class="t c" style="left:30px;width:77px;text-align:right;top:445px;">27-Oct</div>
<div class="t c" style="left:114px;top:445px;">East</div>
<div class="t c" style="left:194px;top:445px;">Ford</div>
<div class="t c" style="left:274px;top:445px;">Binder</div>
<div class="t c" style="left:350px;width:77px;text-align:right;top:445px;">65</div>
<div class="t c" style="left:30px;width:77px;text-align:right;top:469px;">28-Oct</div>
<div class="t c" style="left:114px;top:469px;">East</div>
<div class="t c" style="left:194px;top:469px;">Janice</div>
<div class="t c" style="left:274px;top:469px;">Pen</div>
<div class="t c" style="left:350px;width:77px;text-align:right;top:469px;">34</div>
<div class="a" style="left:590px;top:296px;width:219px;height:241px;background:#fff"></div>
<div class="a" style="left:590px;top:296px;width:219px;height:24px;background:#d9e1f2;border-bottom:1px solid #8ea9db"></div>
<div class="a" style="left:590px;top:512px;width:219px;height:25px;background:#d9e1f2;border-top:1px solid #8ea9db"></div>
<div class="a" style="left:682px;top:298px;width:21px;height:21px;background:#f4f6fa;border:1px solid #a6a6a6"></div>
<svg class="a" style="left:688px;top:306px" width="9" height="5" viewBox="0 0 9 5"><path d="M0 0 H9 L4.5 5 Z" fill="#777"/></svg>
<div class="t c" style="left:594px;top:301px;font-weight:bold;letter-spacing:-0.3px;">Row Labels</div>
<div class="t c" style="left:703px;width:103px;text-align:right;top:301px;font-weight:bold;letter-spacing:-0.3px;">Sum of Units</div>
<div class="t c" style="left:594px;top:325px;">21-Oct</div>
<div class="t c" style="left:703px;width:103px;text-align:right;top:325px;">95</div>
<div class="t c" style="left:594px;top:349px;">22-Oct</div>
<div class="t c" style="left:703px;width:103px;text-align:right;top:349px;">45</div>
<div class="t c" style="left:594px;top:373px;">23-Oct</div>
<div class="t c" style="left:703px;width:103px;text-align:right;top:373px;">34</div>
<div class="t c" style="left:594px;top:397px;">24-Oct</div>
<div class="t c" style="left:703px;width:103px;text-align:right;top:397px;">80</div>
<div class="t c" style="left:594px;top:421px;">25-Oct</div>
<div class="t c" style="left:703px;width:103px;text-align:right;top:421px;">10</div>
<div class="t c" style="left:594px;top:445px;">26-Oct</div>
<div class="t c" style="left:703px;width:103px;text-align:right;top:445px;">23</div>
<div class="t c" style="left:594px;top:469px;">27-Oct</div>
<div class="t c" style="left:703px;width:103px;text-align:right;top:469px;">65</div>
<div class="t c" style="left:594px;top:493px;">28-Oct</div>
<div class="t c" style="left:703px;width:103px;text-align:right;top:493px;">34</div>
<div class="t c" style="left:594px;top:517px;font-weight:bold;letter-spacing:-0.3px;">Grand Total</div>
<div class="t c" style="left:703px;width:103px;text-align:right;top:517px;font-weight:bold;letter-spacing:-0.3px;">386</div>
<div class="a" style="left:1033px;top:248px;width:25px;height:718px;background:#e9e9e9"></div>
<div class="a" style="left:1058px;top:248px;width:1px;height:718px;background:#c6c6c6"></div>
<div class="a" style="left:1036px;top:251px;width:19px;height:19px;background:#fff;border:1px solid #8a8a8a"></div>
<svg class="a" style="left:1041px;top:257px" width="9" height="5" viewBox="0 0 9 5"><path d="M0 5 L4.5 0 L9 5 Z" fill="#222"/></svg>
<div class="a" style="left:1036px;top:270px;width:19px;height:671px;background:#fff;border:1px solid #8a8a8a"></div>
<div class="a" style="left:1037px;top:942px;width:17px;height:23px;background:#f2f2f2"></div>
<div class="a" style="left:1036px;top:965px;width:19px;height:1px;background:#8a8a8a"></div>
<!--/GRID-->
<!--CHART-->
<div class="a" style="left:46px;top:557px;width:660px;height:361px;background:#fff;border:1px solid #505050;box-shadow:0 0 0 0.4px rgba(80,80,80,0.5)"></div>
<div class="a" style="left:94px;top:843.7px;width:522px;height:1px;background:#d9d9d9"></div>
<div class="t ax" style="left:40px;width:40px;text-align:right;top:837.2px">0</div>
<div class="a" style="left:94px;top:804.9px;width:522px;height:1px;background:#d9d9d9"></div>
<div class="t ax" style="left:40px;width:40px;text-align:right;top:798.4px">20</div>
<div class="a" style="left:94px;top:766.1px;width:522px;height:1px;background:#d9d9d9"></div>
<div class="t ax" style="left:40px;width:40px;text-align:right;top:759.6px">40</div>
<div class="a" style="left:94px;top:727.3px;width:522px;height:1px;background:#d9d9d9"></div>
<div class="t ax" style="left:40px;width:40px;text-align:right;top:720.8px">60</div>
<div class="a" style="left:94px;top:688.5px;width:522px;height:1px;background:#d9d9d9"></div>
<div class="t ax" style="left:40px;width:40px;text-align:right;top:682.0px">80</div>
<div class="a" style="left:94px;top:649.7px;width:522px;height:1px;background:#d9d9d9"></div>
<div class="t ax" style="left:40px;width:40px;text-align:right;top:643.2px">100</div>
<div class="a" style="left:116.2px;top:659.9px;width:19.6px;height:184.3px;background:#4472c4"></div>
<div class="t ax" style="left:86.0px;width:80px;text-align:center;top:856px">21-Oct</div>
<div class="a" style="left:181.5px;top:756.9px;width:19.6px;height:87.3px;background:#4472c4"></div>
<div class="t ax" style="left:151.3px;width:80px;text-align:center;top:856px">22-Oct</div>
<div class="a" style="left:246.7px;top:778.2px;width:19.6px;height:66.0px;background:#4472c4"></div>
<div class="t ax" style="left:216.5px;width:80px;text-align:center;top:856px">23-Oct</div>
<div class="a" style="left:312.0px;top:689.0px;width:19.6px;height:155.2px;background:#4472c4"></div>
<div class="t ax" style="left:281.8px;width:80px;text-align:center;top:856px">24-Oct</div>
<div class="a" style="left:377.2px;top:824.8px;width:19.6px;height:19.4px;background:#4472c4"></div>
<div class="t ax" style="left:347.0px;width:80px;text-align:center;top:856px">25-Oct</div>
<div class="a" style="left:442.5px;top:799.6px;width:19.6px;height:44.6px;background:#4472c4"></div>
<div class="t ax" style="left:412.3px;width:80px;text-align:center;top:856px">26-Oct</div>
<div class="a" style="left:507.8px;top:718.1px;width:19.6px;height:126.1px;background:#4472c4"></div>
<div class="t ax" style="left:477.6px;width:80px;text-align:center;top:856px">27-Oct</div>
<div class="a" style="left:573.0px;top:778.2px;width:19.6px;height:66.0px;background:#4472c4"></div>
<div class="t ax" style="left:542.8px;width:80px;text-align:center;top:856px">28-Oct</div>
<div class="t" style="left:275px;width:200px;text-align:center;top:604px;font-size:21px;color:#595959">Total</div>
<div class="a" style="left:643px;top:754px;width:8px;height:8px;background:#4472c4"></div>
<div class="t ax" style="left:654px;top:749px">Total</div>
<div class="a" style="left:59px;top:566px;width:85px;height:22px;background:linear-gradient(#e2e2e2,#cfcfcf)"></div>
<div class="t" style="left:63px;top:571px;font-size:12.5px;color:#111">Sum of Units</div>
<div class="a" style="left:59px;top:883.5px;width:55px;height:21px;background:linear-gradient(#e2e2e2,#cfcfcf)"></div>
<div class="t" style="left:63px;top:888px;font-size:12.5px;color:#111">Date</div>
<svg class="a" style="left:98px;top:891px" width="10" height="6" viewBox="0 0 10 6"><path d="M0 0 H10 L5 6 Z" fill="#333"/></svg>
<svg class="a" style="left:0;top:0" width="760" height="930"><circle cx="46.5" cy="557.5" r="5.7" fill="#fff" stroke="#555" stroke-width="2.2"/><circle cx="376" cy="557.5" r="5.7" fill="#fff" stroke="#555" stroke-width="2.2"/><circle cx="705.5" cy="557.5" r="5.7" fill="#fff" stroke="#555" stroke-width="2.2"/><circle cx="46.5" cy="737.5" r="5.7" fill="#fff" stroke="#555" stroke-width="2.2"/><circle cx="705.5" cy="737.5" r="5.7" fill="#fff" stroke="#555" stroke-width="2.2"/><circle cx="46.5" cy="917.5" r="5.7" fill="#fff" stroke="#555" stroke-width="2.2"/><circle cx="376" cy="917.5" r="5.7" fill="#fff" stroke="#555" stroke-width="2.2"/><circle cx="705.5" cy="917.5" r="5.7" fill="#fff" stroke="#555" stroke-width="2.2"/></svg>
<div class="a" style="left:720px;top:556px;width:35px;height:35px;background:#fff;border:1px solid #555"></div>
<svg class="a" style="left:729px;top:565px" width="16" height="16" viewBox="0 0 16 16"><path d="M8 1.5 V14.5 M1.5 8 H14.5" stroke="#66a38f" stroke-width="3.6"/></svg>
<div class="a" style="left:720px;top:603px;width:35px;height:35px;background:#fff;border:1px solid #555"></div>
<svg class="a" style="left:726px;top:609px" width="24" height="24" viewBox="0 0 24 24"><path d="M13.5 8.5 L19.5 2.5 L20.5 3.5 L15 9.5 Z" fill="#6d6d6d" stroke="#6d6d6d" stroke-width="1.6" stroke-linejoin="round"/><path d="M12.6 10.2 L13.8 11.4" stroke="#6d6d6d" stroke-width="1.6"/><path d="M2.5 19.5 C5 17.5 6 14 8.5 12.5 C10.5 11.5 12.5 12.5 12 14.5 C11.2 17.5 7 19.5 2.5 19.5 Z" fill="#3f73b5"/><circle cx="9.3" cy="14.3" r="1.1" fill="#fff"/></svg>
<!--/CHART-->
<!--PANE-->
<div class="a" style="left:1059px;top:248px;width:435px;height:718px;background:#e6e6e6"></div>
<div class="t" style="left:1073px;top:264px;font-size:26px;color:#3a3a3a">PivotChart Fields</div>
<svg class="a" style="left:1408px;top:271px" width="18" height="10" viewBox="0 0 18 10"><path d="M1 1 L9 9 L17 1" stroke="#444" stroke-width="1.4" fill="none"/></svg>
<svg class="a" style="left:1461px;top:269px" width="14" height="14" viewBox="0 0 14 14"><path d="M1 1 L13 13 M13 1 L1 13" stroke="#444" stroke-width="1.4"/></svg>
<div class="t pn" style="left:1075px;top:314px">Choose fields to add to report:</div>
<div class="a" style="left:1425px;top:305px;width:56px;height:35px;background:#fff;border:1px solid #c6c6c6"></div>
<svg class="a" style="left:1437px;top:312px" width="20" height="20" viewBox="0 0 20 20"><g fill="#8a8a8a"><circle cx="10" cy="10" r="6"/><rect x="8.3" y="2" width="3.4" height="16"/><rect x="2" y="8.3" width="16" height="3.4"/><rect x="8.3" y="2" width="3.4" height="16" transform="rotate(45 10 10)"/><rect x="8.3" y="2" width="3.4" height="16" transform="rotate(-45 10 10)"/></g><circle cx="10" cy="10" r="2.5" fill="#fff"/></svg>
<svg class="a" style="left:1465px;top:319px" width="10" height="6" viewBox="0 0 10 6"><path d="M0 0 H10 L5 6 Z" fill="#444"/></svg>
<div class="a" style="left:1074px;top:357px;width:407px;height:28px;background:#fff;border:1px solid #c6c6c6"></div>
<div class="t pn" style="left:1082px;top:362px;color:#6b6b6b">Search</div>
<svg class="a" style="left:1455px;top:359px" width="22" height="22" viewBox="0 0 22 22"><circle cx="13" cy="9" r="6.5" stroke="#444" stroke-width="1.3" fill="none"/><path d="M8.5 13.5 L2 20" stroke="#444" stroke-width="1.5"/></svg>
<div class="a" style="left:1074px;top:406px;width:407px;height:213px;background:#fff;border:1px solid #ababab"></div>
<div class="a" style="left:1079px;top:410.3px;width:16px;height:16px;background:#217346"></div>
<svg class="a" style="left:1082px;top:413.3px" width="10" height="8" viewBox="0 0 10 8"><path d="M1 4 L4 7 L9 1" stroke="#fff" stroke-width="1.2" fill="none"/></svg>
<div class="t pn" style="left:1102px;top:413.3px;font-weight:bold;color:#222">Date</div>
<div class="a" style="left:1079px;top:437.3px;width:16px;height:16px;background:#fff;border:1px solid #7a7a7a"></div>
<div class="t pn" style="left:1102px;top:440.3px">Region</div>
<div class="a" style="left:1079px;top:464.3px;width:16px;height:16px;background:#fff;border:1px solid #7a7a7a"></div>
<div class="t pn" style="left:1102px;top:467.3px">Rep</div>
<div class="a" style="left:1079px;top:491.3px;width:16px;height:16px;background:#fff;border:1px solid #7a7a7a"></div>
<div class="t pn" style="left:1102px;top:494.3px">Item</div>
<div class="a" style="left:1079px;top:518.3px;width:16px;height:16px;background:#217346"></div>
<svg class="a" style="left:1082px;top:521.3px" width="10" height="8" viewBox="0 0 10 8"><path d="M1 4 L4 7 L9 1" stroke="#fff" stroke-width="1.2" fill="none"/></svg>
<div class="t pn" style="left:1102px;top:521.3px;font-weight:bold;color:#222">Units</div>
<div class="a" style="left:1077px;top:638px;width:408px;height:0;border-top:1px dotted #bdbdbd"></div>
<div class="t pn" style="left:1079px;top:646px">Drag fields between areas below:</div>
<div class="a" style="left:1279px;top:685px;width:1px;height:260px;background:#cfcfcf"></div>
<div class="a" style="left:1078px;top:814px;width:404px;height:1px;background:#cfcfcf"></div>
<div class="a" style="left:1078px;top:711px;width:194px;height:96px;background:#fff"></div>
<div class="a" style="left:1282px;top:711px;width:200px;height:96px;background:#fff"></div>
<div class="a" style="left:1078px;top:850px;width:194px;height:94px;background:#fff"></div>
<div class="a" style="left:1282px;top:850px;width:200px;height:94px;background:#fff"></div>
<svg class="a" style="left:1082px;top:685px" width="16" height="18" viewBox="0 0 16 18"><path d="M1 2.5 H15 L10 9 V17 H6 V9 Z" fill="#a0a0a0"/><path d="M1.5 0.5 V3 M5 0.5 V3 M8 0.5 V3 M11 0.5 V3 M14.5 0.5 V3" stroke="#a0a0a0" stroke-width="1.4"/><path d="M6 11 V17 H10 V11" fill="#b8b8b8"/></svg>
<div class="t pn" style="left:1106px;top:688px">Filters</div>
<svg class="a" style="left:1288px;top:688px" width="12" height="13" viewBox="0 0 12 13"><rect x="0" y="0" width="3" height="13" fill="#9a9a9a"/><path d="M5 0 V13 M8 0 V13 M11 0 V13" stroke="#9a9a9a" stroke-width="1.2"/></svg>
<div class="t pn" style="left:1310px;top:688px">Legend (Series)</div>
<svg class="a" style="left:1083px;top:827px" width="14" height="11" viewBox="0 0 14 11"><path d="M0 1 H14 M0 4 H14 M0 7 H14 M0 10 H14" stroke="#9a9a9a" stroke-width="1.3"/></svg>
<div class="t pn" style="left:1106px;top:825px">Axis (Categories)</div>
<div class="t" style="left:1288px;top:824px;font-size:17px;color:#8a8a8a;font-weight:bold">&Sigma;</div>
<div class="t pn" style="left:1310px;top:825px">Values</div>
<div class="a" style="left:1079px;top:850px;width:192px;height:26px;background:#fff;border:1px solid #bdbdbd"></div>
<div class="t pn" style="left:1088px;top:855px">Date</div>
<svg class="a" style="left:1248px;top:860px" width="11" height="6" viewBox="0 0 11 6"><path d="M0 0 H11 L5.5 6 Z" fill="#222"/></svg>
<div class="a" style="left:1283px;top:850px;width:198px;height:26px;background:#fff;border:1px solid #bdbdbd"></div>
<div class="t pn" style="left:1292px;top:855px">Sum of Units</div>
<svg class="a" style="left:1459px;top:860px" width="11" height="6" viewBox="0 0 11 6"><path d="M0 0 H11 L5.5 6 Z" fill="#222"/></svg>
<!--/PANE-->
</body></html>
